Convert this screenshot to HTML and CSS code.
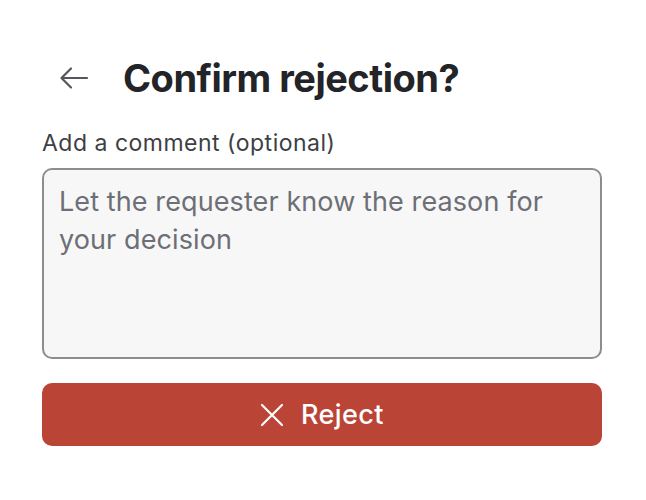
FILE: index.html
```html
<!DOCTYPE html>
<html>
<head>
<meta charset="utf-8">
<link rel="stylesheet" href="styles.css">
</head>
<body>
<div class="panel">
  <div class="header">
    <button class="back" aria-label="Back">
      <svg width="30" height="24" viewBox="0 0 30 24"><path d="M28 12H3M12 2.5L2.5 12L12 21.5" fill="none" stroke="#55575c" stroke-width="2.2" stroke-linecap="round" stroke-linejoin="round"/></svg>
    </button>
    <h1 class="title">Confirm rejection?</h1>
  </div>
  <label class="label" for="c">Add a comment (optional)</label>
  <textarea id="c" class="comment" placeholder="Let the requester know the reason for your decision"></textarea>
  <button class="reject">
    <svg width="24" height="24" viewBox="0 0 24 24"><path d="M2 2L22 22M22 2L2 22" stroke="#fff" stroke-width="2.2" stroke-linecap="round"/></svg>
    <span>Reject</span>
  </button>
</div>
</body>
</html>
```
FILE: styles.css
```css
html, body { margin: 0; padding: 0; background: #fff; }
body { font-family: Inter, "Noto Sans", sans-serif; color: #232428; }
.panel { width: 560px; padding: 55px 0 0 42px; display: flex; flex-direction: column; }
.header { display: flex; align-items: center; height: 46px; }
.back { border: 0; background: none; padding: 0; margin: 0 0 0 17px; width: 30px; height: 24px; display: flex; cursor: pointer; }
.title { margin: 0 0 0 34px; font-size: 38px; font-weight: 700; letter-spacing: -0.5px; color: #232428; line-height: 46px; }
.label { margin-top: 29px; font-size: 23px; letter-spacing: 0.5px; line-height: 26px; color: #3d3f44; }
.comment { margin-top: 12px; box-sizing: border-box; width: 560px; height: 191px; resize: none; border: 2px solid #8b8d92; border-radius: 10px; background: #f7f7f7; padding: 13px 15px; font-family: Inter, "Noto Sans", sans-serif; font-size: 27px; letter-spacing: 0.1px; line-height: 38px; color: #232428; }
.comment::placeholder { color: #6c6f75; }
.reject { margin-top: 24px; height: 63px; width: 560px; border: 0; border-radius: 10px; background: #ba4436; color: #fff; display: flex; align-items: center; justify-content: center; gap: 17px; font-family: Inter, "Noto Sans", sans-serif; font-size: 27px; letter-spacing: 0.4px; font-weight: 500; cursor: pointer; }
.reject svg { margin-left: 0; }
```
